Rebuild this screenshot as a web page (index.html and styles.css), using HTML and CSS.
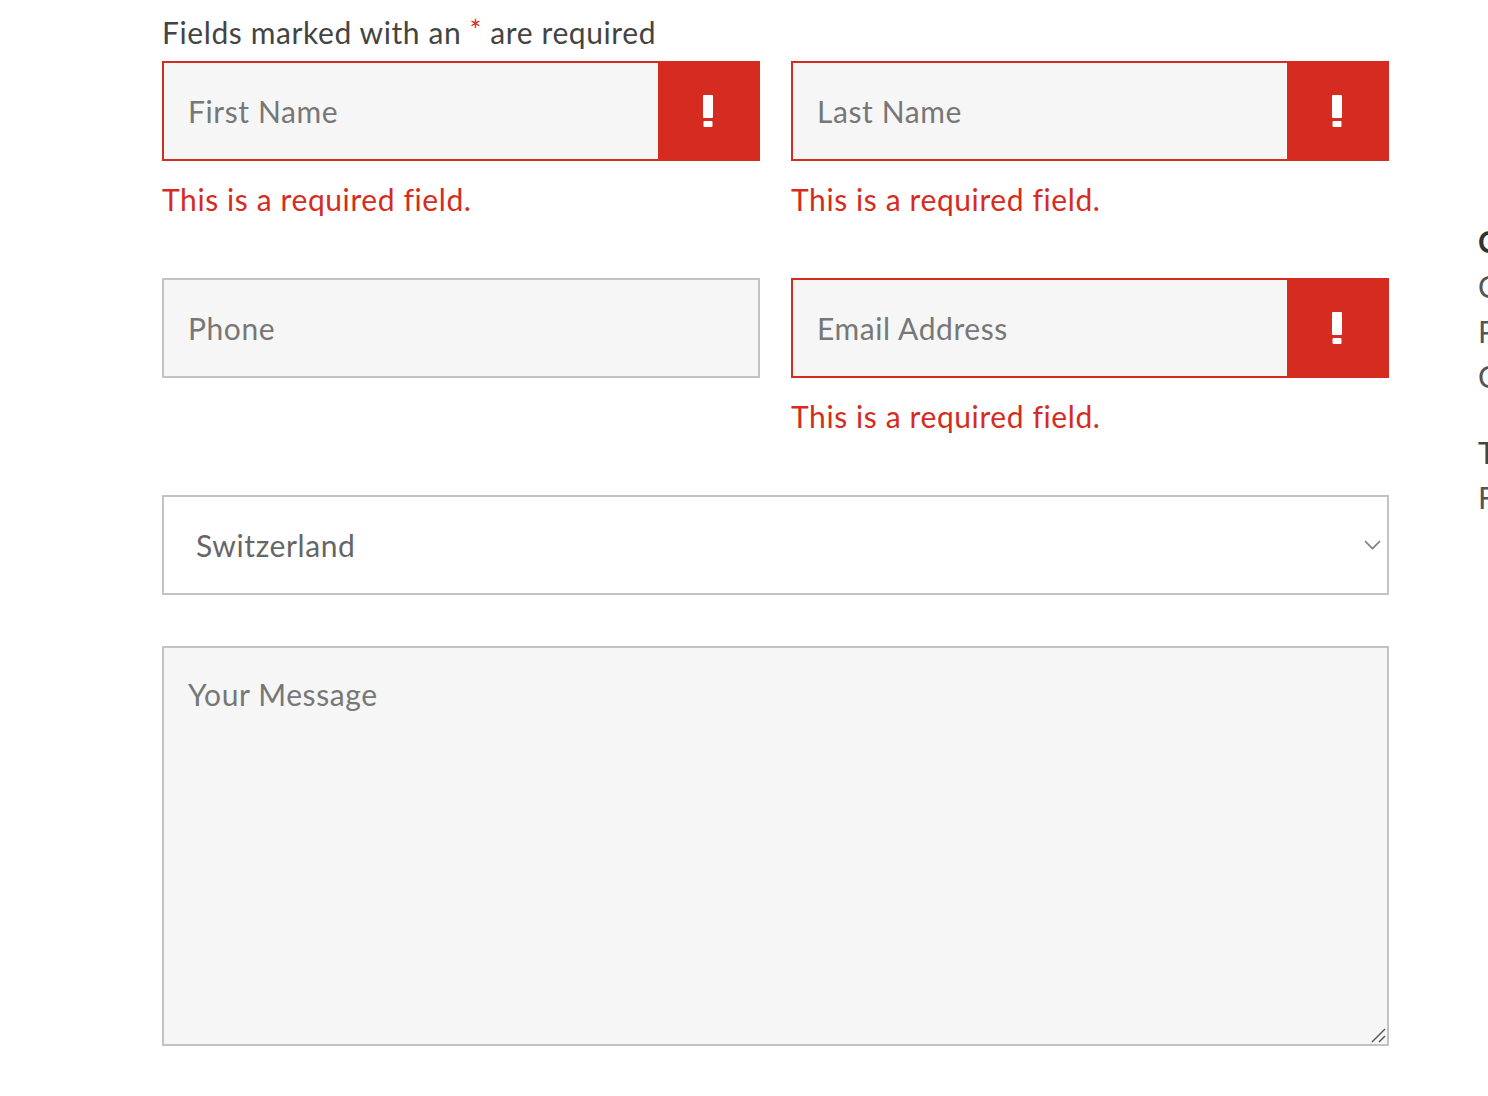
FILE: index.html
```html
<!DOCTYPE html>
<html lang="en">
<head>
<meta charset="utf-8">
<title>Contact form</title>
<link rel="stylesheet" href="styles.css">
</head>
<body>
<div class="page">
  <form class="form" novalidate>
    <p class="note">Fields marked with an <span class="star">*</span> are required</p>

    <div class="row">
      <div class="group">
        <div class="field has-error">
          <input class="input" type="text" placeholder="First Name">
          <span class="err-icon"><svg width="10" height="32" viewBox="0 0 10 32"><rect x="0" y="0" width="10" height="23" rx="1" fill="#fff"/><rect x="0.5" y="26" width="9" height="6" rx="1" fill="#fff"/></svg></span>
        </div>
        <p class="err-msg">This is a required field.</p>
      </div>
      <div class="group">
        <div class="field has-error">
          <input class="input" type="text" placeholder="Last Name">
          <span class="err-icon"><svg width="10" height="32" viewBox="0 0 10 32"><rect x="0" y="0" width="10" height="23" rx="1" fill="#fff"/><rect x="0.5" y="26" width="9" height="6" rx="1" fill="#fff"/></svg></span>
        </div>
        <p class="err-msg">This is a required field.</p>
      </div>
    </div>

    <div class="row">
      <div class="group">
        <div class="field">
          <input class="input" type="tel" placeholder="Phone">
        </div>
      </div>
      <div class="group">
        <div class="field has-error">
          <input class="input" type="email" placeholder="Email Address">
          <span class="err-icon"><svg width="10" height="32" viewBox="0 0 10 32"><rect x="0" y="0" width="10" height="23" rx="1" fill="#fff"/><rect x="0.5" y="26" width="9" height="6" rx="1" fill="#fff"/></svg></span>
        </div>
        <p class="err-msg">This is a required field.</p>
      </div>
    </div>

    <div class="select-wrap">
      <select class="select">
        <option>Switzerland</option>
        <option>Germany</option>
        <option>France</option>
      </select>
      <svg class="chevron" width="17" height="10" viewBox="0 0 17 10"><polyline points="1,1 8.5,8.5 16,1" fill="none" stroke="#7a7a7a" stroke-width="1.6"/></svg>
    </div>

    <div class="message-wrap">
      <textarea class="message" placeholder="Your Message"></textarea>
      <svg class="grip" width="16" height="16" viewBox="0 0 16 16"><line x1="2" y1="15" x2="15" y2="2" stroke="#555" stroke-width="1.5"/><line x1="9" y1="15" x2="15" y2="9" stroke="#555" stroke-width="1.5"/></svg>
    </div>
  </form>

  <aside class="side">
    <p class="side-title">Contact</p>
    <p>Company Headquarters</p>
    <p>Postfach 1234</p>
    <p>CH-8000 Zürich</p>
    <p class="side-gap">T +41 44 000 00 00</p>
    <p>F +41 44 000 00 01</p>
  </aside>
</div>
</body>
</html>
```

FILE: styles.css
```css
html, body {
  margin: 0;
  padding: 0;
  background: #fff;
  overflow: hidden;
}

body {
  font-family: Lato, "Open Sans", "Liberation Sans", sans-serif;
  font-size: 30px;
  letter-spacing: 0.6px;
  color: #444;
}

.page {
  display: flex;
  gap: 89px;
  padding-left: 162px;
  width: 1800px;
}

.form {
  width: 1227px;
  flex: none;
  padding-top: 12px;
  margin: 0;
}

.note {
  margin: 0 0 9px;
  line-height: 40px;
  color: #444;
}

.star {
  color: #d62b20;
  font-size: 28px;
  vertical-align: 3px;
  line-height: 1;
}

.row {
  display: grid;
  grid-template-columns: 598px 598px;
  column-gap: 31px;
  margin-bottom: 59px;
}

.field {
  display: flex;
  height: 100px;
  box-sizing: border-box;
  border: 2px solid #c3c3c3;
  background: #f6f6f6;
}

.field.has-error {
  border-color: #d62b20;
}

.input {
  flex: 1;
  min-width: 0;
  border: 0;
  outline: 0;
  margin: 0;
  padding: 0 0 0 24px;
  background: #f6f6f6;
  font: inherit;
  letter-spacing: 0.6px;
  color: #555;
}

.input::placeholder,
.message::placeholder {
  color: #777;
  opacity: 1;
}

.err-icon {
  flex: none;
  width: 100px;
  background: #d62b20;
  display: flex;
  align-items: center;
  justify-content: center;
}

.err-icon svg {
  display: block;
}

.err-msg {
  margin: 18px 0 0;
  line-height: 40px;
  color: #d62b20;
}

.select-wrap {
  position: relative;
  margin-bottom: 51px;
}

.select {
  display: block;
  width: 100%;
  height: 100px;
  box-sizing: border-box;
  border: 2px solid #c3c3c3;
  border-radius: 0;
  background: #fff;
  -webkit-appearance: none;
  appearance: none;
  font: inherit;
  letter-spacing: 0.6px;
  color: #666;
  padding: 0 0 0 32px;
  outline: 0;
}

.chevron {
  position: absolute;
  right: 8px;
  top: 45px;
  pointer-events: none;
}

.message-wrap {
  position: relative;
}

.message {
  display: block;
  width: 100%;
  height: 400px;
  box-sizing: border-box;
  border: 2px solid #c3c3c3;
  border-radius: 0;
  background: #f6f6f6;
  font: inherit;
  letter-spacing: 0.6px;
  line-height: 40px;
  color: #555;
  padding: 26px 24px;
  margin: 0;
  resize: none;
  outline: 0;
}

.grip {
  position: absolute;
  right: 3px;
  bottom: 3px;
  pointer-events: none;
}

.side {
  flex: none;
  width: 400px;
  padding-top: 219px;
  color: #555;
}

.side p {
  margin: 0;
  line-height: 45px;
  white-space: nowrap;
}

.side .side-title {
  font-weight: 700;
  color: #333;
}

.side .side-gap {
  margin-top: 31px;
  color: #444;
}
```
